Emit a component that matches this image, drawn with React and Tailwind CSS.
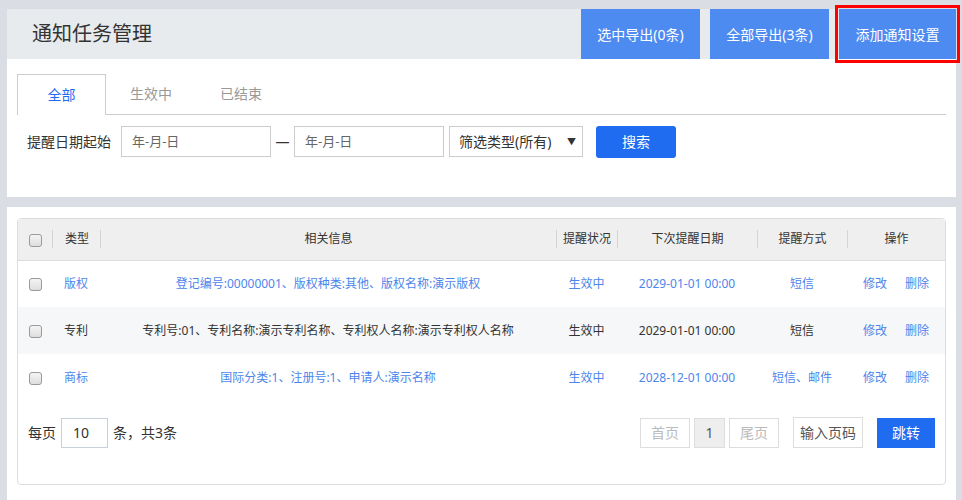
import React from 'react';

const FONT = { fontFamily: '"Noto Sans", "Noto Sans CJK SC", sans-serif' };

const ROWS = [
  { type: '版权', info: '登记编号:00000001、版权种类:其他、版权名称:演示版权', status: '生效中', date: '2029-01-01 00:00', way: '短信', link: true },
  { type: '专利', info: '专利号:01、专利名称:演示专利名称、专利权人名称:演示专利权人名称', status: '生效中', date: '2029-01-01 00:00', way: '短信', link: false },
  { type: '商标', info: '国际分类:1、注册号:1、申请人:演示名称', status: '生效中', date: '2028-12-01 00:00', way: '短信、邮件', link: true },
];

function Check() {
  return <span className="inline-block w-[13px] h-[13px] rounded-[3px] border border-[#9a9a9a] bg-gradient-to-b from-[#f4f4f4] to-[#dedede] align-middle" />;
}

function HeadCell({ children, sep = true, left = false }) {
  return (
    <th className="p-0 font-normal">
      <div className={`${sep ? 'border-l border-[#d4d4d4]' : ''} ${left ? 'text-left pl-3' : 'text-center'} leading-[18px]`}>
        {children}
      </div>
    </th>
  );
}

export default function App() {
  return (
    <div className="min-h-[500px] bg-[#dadde3] pt-[9px] pl-[7px] pr-[6px] text-[#333]" style={FONT}>
      {/* header */}
      <div className="flex h-[50px] bg-[#e8ebee]">
        <h1 className="flex-1 pl-[25px] text-[20px] leading-[50px] text-[#333]">通知任务管理</h1>
        <div className="flex gap-[10px]">
          <button className="w-[119px] h-[50px] bg-[#4e8bf1] text-white text-[14px]">选中导出(0条)</button>
          <button className="w-[119px] h-[50px] bg-[#4e8bf1] text-white text-[14px]">全部导出(3条)</button>
          <button className="w-[117px] h-[50px] bg-[#4e8bf1] text-white text-[14px] outline-[3px] outline-solid outline-[#ff0000] outline-offset-[1px]">添加通知设置</button>
        </div>
      </div>

      {/* filter panel */}
      <div className="bg-white h-[138px] px-[10px] pt-[15px]">
        <div className="flex border-b border-[#cccccc] h-[41px]">
          <div className="w-[89px] h-[41px] border border-b-0 border-[#cccccc] bg-white text-center leading-[40px] text-[14px] text-[#1f6cf0]">全部</div>
          <div className="w-[90px] text-center leading-[40px] text-[14px] text-[#999]">生效中</div>
          <div className="w-[90px] text-center leading-[40px] text-[14px] text-[#999]">已结束</div>
        </div>
        <div className="flex items-center mt-[11px] h-[31px]">
          <span className="pl-[10px] w-[104px] text-[14px] text-[#333]">提醒日期起始</span>
          <div className="w-[150px] h-[31px] border border-[#cccccc] pl-[10px] text-[13px] leading-[29px] text-[#666]">年-月-日</div>
          <span className="w-[23px] text-center text-[14px] text-[#333]">—</span>
          <div className="w-[150px] h-[31px] border border-[#cccccc] pl-[10px] text-[13px] leading-[29px] text-[#666]">年-月-日</div>
          <div className="ml-[5px] w-[134px] h-[31px] border border-[#cccccc] pl-[9px] pr-[6px] flex items-center justify-between text-[14px] text-[#333]">
            <span>筛选类型(所有)</span>
            <span className="text-[9px]">▼</span>
          </div>
          <button className="ml-[13px] w-[80px] h-[32px] rounded-[3px] bg-[#1f6cf0] text-white text-[14px]">搜索</button>
        </div>
      </div>

      {/* table panel */}
      <div className="mt-[10px] bg-white min-h-[293px] px-[10px] pt-[11px]">
        <div className="border border-[#dddddd] rounded-[4px] h-[267px]">
          <table className="w-full table-fixed border-collapse text-[12px]">
            <colgroup>
              <col className="w-[34px]" />
              <col className="w-[48px]" />
              <col className="w-[456px]" />
              <col className="w-[61px]" />
              <col className="w-[140px]" />
              <col className="w-[90px]" />
              <col className="w-[98px]" />
            </colgroup>
            <thead>
              <tr className="h-[41px] bg-[#efefef] border-b border-[#dddddd] text-[#333]">
                <th className="p-0 font-normal text-center"><Check /></th>
                <HeadCell left>类型</HeadCell>
                <HeadCell>相关信息</HeadCell>
                <HeadCell>提醒状况</HeadCell>
                <HeadCell>下次提醒日期</HeadCell>
                <HeadCell>提醒方式</HeadCell>
                <HeadCell>操作</HeadCell>
              </tr>
            </thead>
            <tbody>
              {ROWS.map((r, i) => {
                const c = r.link ? 'text-[#4d86ea]' : 'text-[#333]';
                return (
                  <tr key={r.type} className={`h-[47px] ${i % 2 === 1 ? 'bg-[#f6f7f9]' : 'bg-white'}`}>
                    <td className="text-center"><Check /></td>
                    <td className={`pl-3 ${c}`}>{r.type}</td>
                    <td className={`text-center whitespace-nowrap ${c}`}>{r.info}</td>
                    <td className={`text-center ${c}`}>{r.status}</td>
                    <td className={`text-center ${c}`}>{r.date}</td>
                    <td className={`text-center ${c}`}>{r.way}</td>
                    <td className="text-center text-[#4d86ea]">
                      <span className="mr-[18px]">修改</span><span>删除</span>
                    </td>
                  </tr>
                );
              })}
            </tbody>
          </table>

          <div className="flex items-center justify-between px-[10px] mt-[16px]">
            <div className="flex items-center text-[14px] text-[#333]">
              <span>每页</span>
              <div className="ml-[5px] w-[47px] h-[30px] border border-[#c8d0da] pl-[11px] leading-[28px] text-[#333]">10</div>
              <span className="ml-[5px]">条，共3条</span>
            </div>
            <div className="flex items-center text-[14px]">
              <div className="w-[50px] h-[30px] border border-[#dddddd] text-center leading-[28px] text-[#bbbbbb]">首页</div>
              <div className="ml-[4px] w-[31px] h-[30px] border border-[#dddddd] bg-[#eeeeee] text-center leading-[28px] text-[#555]">1</div>
              <div className="ml-[4px] w-[50px] h-[30px] border border-[#dddddd] text-center leading-[28px] text-[#bbbbbb]">尾页</div>
              <div className="ml-[14px] w-[70px] h-[31px] border border-[#dddddd] text-center leading-[29px] text-[#555]">输入页码</div>
              <button className="ml-[14px] w-[58px] h-[30px] bg-[#1f6cf0] text-white">跳转</button>
            </div>
          </div>
        </div>
      </div>
    </div>
  );
}
